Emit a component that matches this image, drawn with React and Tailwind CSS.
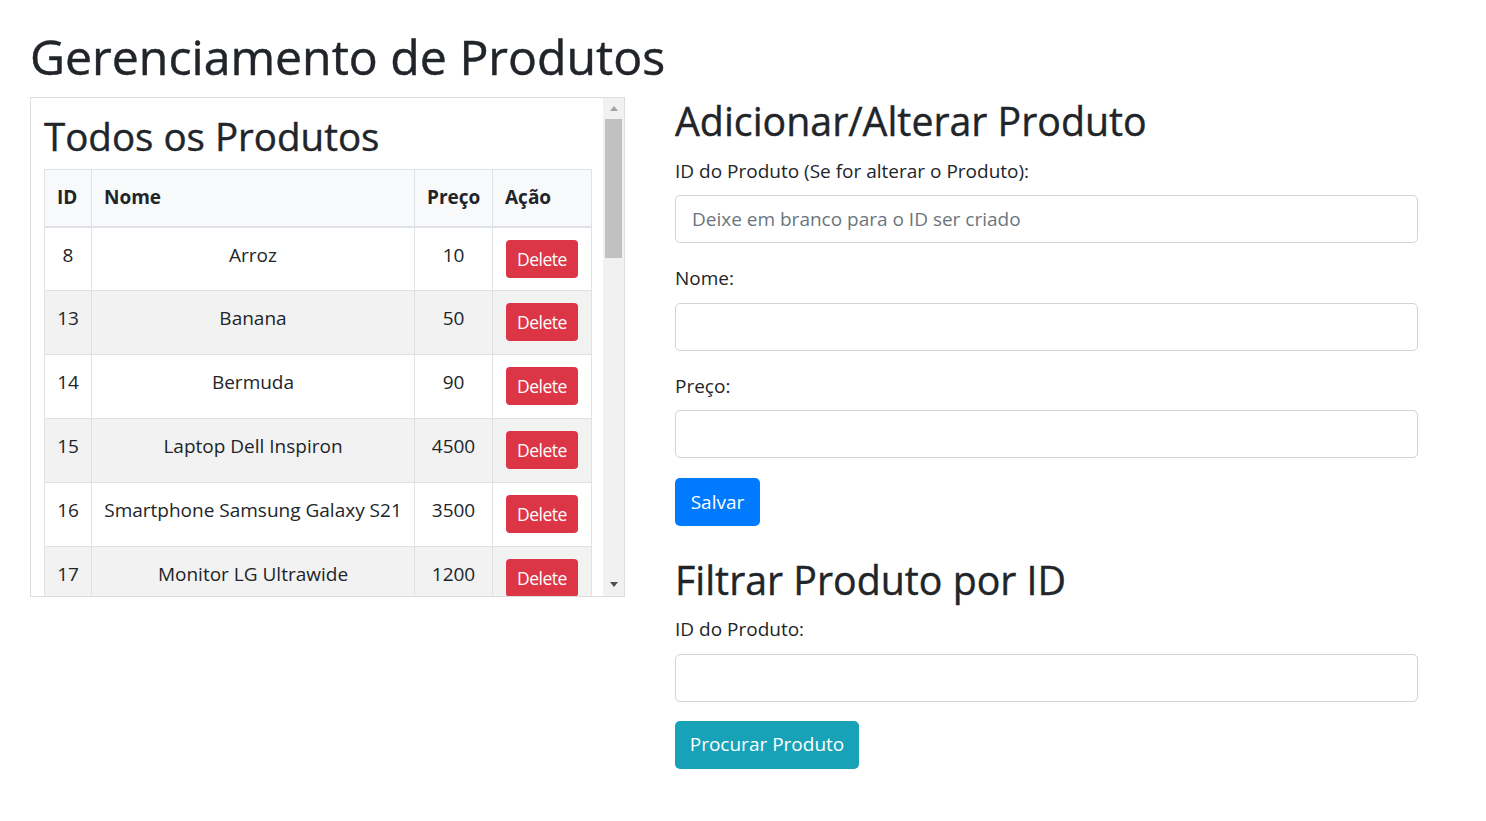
import React from "react";

const rows = [
  [8, "Arroz", 10],
  [13, "Banana", 50],
  [14, "Bermuda", 90],
  [15, "Laptop Dell Inspiron", 4500],
  [16, "Smartphone Samsung Galaxy S21", 3500],
  [17, "Monitor LG Ultrawide", 1200],
];

function Scrollbar() {
  return (
    <div className="w-[21px] shrink-0 bg-[#f1f1f1] flex flex-col">
      <div className="h-[21px] flex items-center justify-center">
        <svg width="8" height="5" viewBox="0 0 8 5">
          <polygon points="0,5 8,5 4,0" fill="#a3a3a3" />
        </svg>
      </div>
      <div className="h-[139px] mx-[2px] bg-[#c1c1c1]" />
      <div className="flex-1" />
      <div className="h-[23px] flex items-center justify-center">
        <svg width="8" height="5" viewBox="0 0 8 5">
          <polygon points="0,0 8,0 4,5" fill="#505050" />
        </svg>
      </div>
    </div>
  );
}

function Field({ label, placeholder, last }) {
  return (
    <div className={last ? "mb-[20px]" : "mb-[21px]"}>
      <label className="block text-[19px] leading-[28.5px] mb-[10px]">{label}</label>
      <input
        type="text"
        placeholder={placeholder}
        className="block w-[743px] h-[48px] border border-[#ced4da] rounded-[5px] px-4 text-[19px] text-[#495057] placeholder:text-[#6c757d] outline-none bg-white"
      />
    </div>
  );
}

const th = "h-[57px] border border-b-2 border-[#dee2e6] px-3 pt-[12px] text-left align-top font-bold leading-[30px]";
const td = "h-[64px] border border-[#dee2e6] px-3 pt-[12px] text-center align-top leading-[30px]";

export default function App() {
  return (
    <div className="min-h-screen bg-white text-[#212529] font-['Open_Sans',sans-serif] pl-[30px] pt-[28px]">
      <h1 className="text-[48.2px] leading-[1.2] font-medium [-webkit-text-stroke:0.45px_#212529] mb-[11px]">
        Gerenciamento de Produtos
      </h1>
      <div className="flex items-start gap-[50px]">
        <div className="w-[595px] h-[500px] border border-[#dddddd] flex overflow-hidden">
          <div className="flex-1 min-w-0 overflow-hidden pt-[15px] pl-[13px]">
            <h2 className="text-[38.5px] leading-[1.2] font-medium [-webkit-text-stroke:0.4px_#212529] mb-[10px]">
              Todos os Produtos
            </h2>
            <table className="w-[547px] table-fixed border-collapse text-[19px]">
              <colgroup>
                <col className="w-[47px]" />
                <col className="w-[323px]" />
                <col className="w-[78px]" />
                <col className="w-[99px]" />
              </colgroup>
              <thead>
                <tr className="bg-[#f8f9fa]">
                  <th className={th}>ID</th>
                  <th className={th}>Nome</th>
                  <th className={th}>Preço</th>
                  <th className={th}>Ação</th>
                </tr>
              </thead>
              <tbody>
                {rows.map(([id, nome, preco], i) => (
                  <tr key={id} className={i % 2 === 1 ? "bg-[#f2f2f2]" : "bg-white"}>
                    <td className={td}>{id}</td>
                    <td className={td + " whitespace-nowrap"}>{nome}</td>
                    <td className={td}>{preco}</td>
                    <td className={td}>
                      <button className="inline-flex items-center justify-center w-[72px] h-[38px] rounded-[4px] bg-[#dc3545] text-white text-[17.5px] tracking-[-0.5px] leading-[24px]">
                        Delete
                      </button>
                    </td>
                  </tr>
                ))}
              </tbody>
            </table>
          </div>
          <Scrollbar />
        </div>

        <div className="w-[743px] pt-[1.5px]">
          <h2 className="text-[39.3px] leading-[1.2] font-medium [-webkit-text-stroke:0.4px_#212529] mb-[11px]">
            Adicionar/Alterar Produto
          </h2>
          <Field label="ID do Produto (Se for alterar o Produto):" placeholder="Deixe em branco para o ID ser criado" />
          <Field label="Nome:" />
          <Field label="Preço:" last />
          <button className="flex items-center justify-center w-[85px] h-[48px] rounded-[5px] bg-[#007bff] text-white text-[19px]">
            Salvar
          </button>
          <h2 className="text-[39.3px] leading-[1.2] font-medium [-webkit-text-stroke:0.4px_#212529] mt-[31px] mb-[11px]">
            Filtrar Produto por ID
          </h2>
          <div className="mb-[19px]">
            <label className="block text-[19px] leading-[28.5px] mb-[10px]">ID do Produto:</label>
            <input
              type="text"
              className="block w-[743px] h-[48px] border border-[#ced4da] rounded-[5px] px-4 text-[19px] outline-none bg-white"
            />
          </div>
          <button className="flex items-center justify-center w-[184px] h-[48px] rounded-[5px] bg-[#17a2b8] text-white text-[19px]">
            Procurar Produto
          </button>
        </div>
      </div>
    </div>
  );
}
